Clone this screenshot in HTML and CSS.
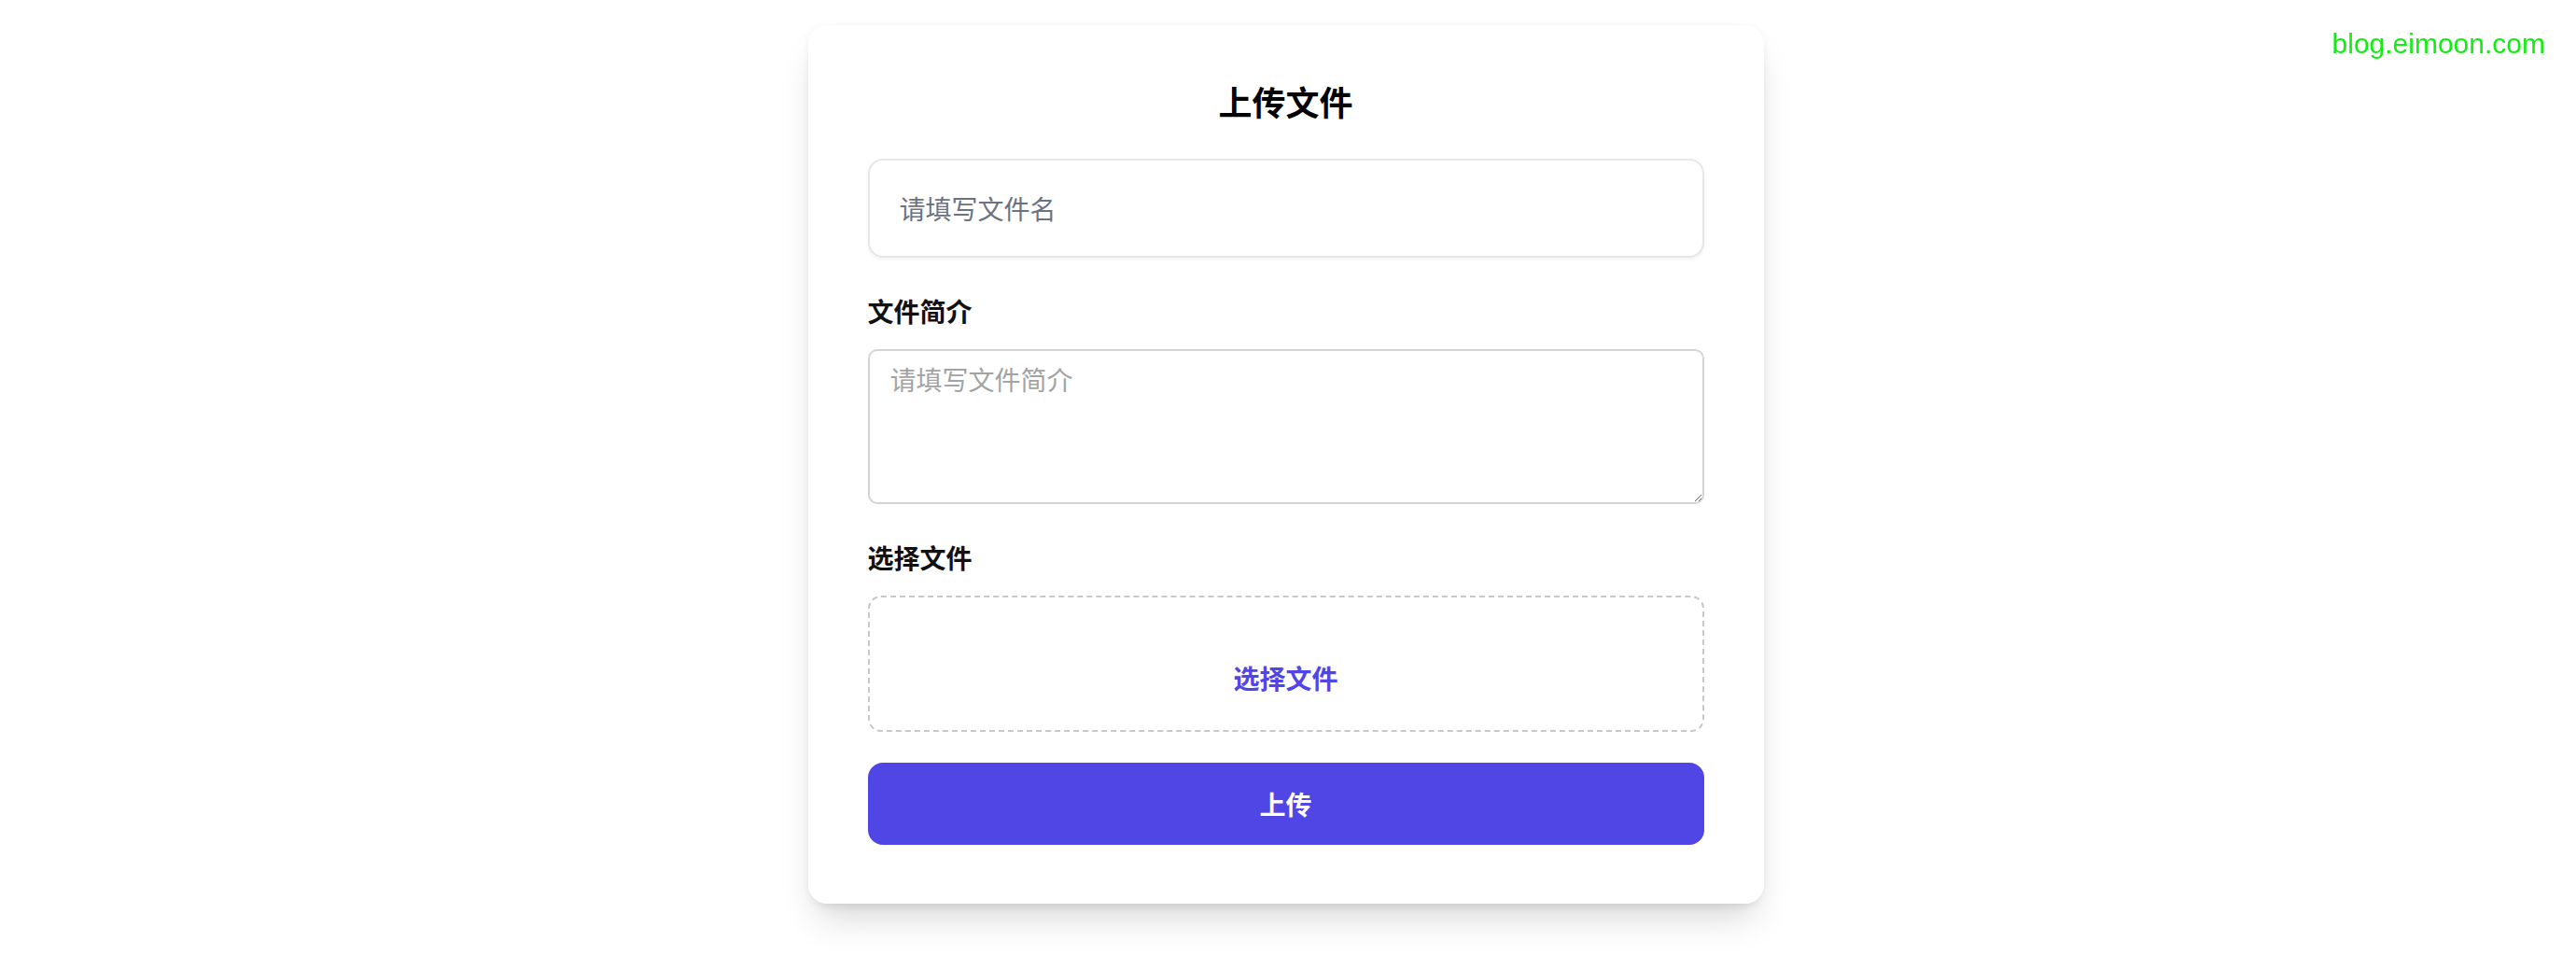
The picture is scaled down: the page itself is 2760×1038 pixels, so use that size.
FILE: index.html
```html
<!DOCTYPE html>
<html lang="zh-CN">
<head>
    <meta charset="UTF-8">
    <meta name="viewport" content="width=device-width, initial-scale=1.0">
    <title>上传文件</title>
    <link rel="stylesheet" href="styles.css">
</head>
<body>

    <div class="watermark">blog.eimoon.com</div>

    <div class="page">
        <form class="card" onsubmit="return false">
            <h1 class="title">上传文件</h1>

            <input type="text" class="name-input" placeholder="请填写文件名">

            <label class="field-label" for="desc">文件简介</label>
            <textarea id="desc" class="desc-input" placeholder="请填写文件简介"></textarea>

            <label class="field-label" for="file">选择文件</label>
            <label class="drop-box" for="file">
                <input type="file" id="file" class="file-input">
                <span class="drop-text">选择文件</span>
            </label>

            <button type="submit" class="upload-btn">上传</button>
        </form>
    </div>

</body>
</html>
```

FILE: styles.css
```css
body {
    margin: 0;
    padding: 0;
    background-color: #fff;
    font-family: "Noto Sans CJK SC", "Noto Sans", sans-serif;
}
.watermark {
    position: fixed;
    top: 30px;
    right: 33px;
    font-family: "Liberation Sans", Arial, sans-serif;
    font-size: 30px;
    color: #11ee11;
}
.page {
    display: flex;
    justify-content: center;
    align-items: flex-start;
    min-height: 1038px;
    box-sizing: border-box;
    padding: 27px 5px 0 0;
}
.card {
    width: 1024px;
    box-sizing: border-box;
    padding: 61px 64px 63px;
    background-color: #fff;
    border-radius: 20px;
    box-shadow: 0 24px 40px -10px rgba(0, 0, 0, 0.16), 0 8px 14px -8px rgba(0, 0, 0, 0.12), 0 0 8px rgba(0, 0, 0, 0.04);
    display: flex;
    flex-direction: column;
}
.title {
    margin: 0 0 42px 0;
    font-size: 36px;
    line-height: 40px;
    font-weight: 700;
    text-align: center;
    color: #000;
}
.name-input {
    height: 106px;
    box-sizing: border-box;
    padding: 32px;
    border: 2px solid #e5e7eb;
    border-radius: 16px;
    box-shadow: 0 2px 4px rgba(0, 0, 0, 0.05);
    font-family: inherit;
    font-size: 28px;
    line-height: 40px;
    outline: none;
}
.name-input::placeholder {
    color: #6b7280;
}
.field-label {
    margin: 37px 0 21px 0;
    font-size: 28px;
    line-height: 40px;
    font-weight: 600;
    color: #111;
}
.desc-input {
    height: 166px;
    box-sizing: border-box;
    padding: 10px 22px;
    border: 2px solid #d4d4d4;
    border-radius: 10px;
    font-family: inherit;
    font-size: 28px;
    line-height: 40px;
    outline: none;
}
.desc-input::placeholder {
    color: #a3a3a3;
}
.drop-box {
    height: 146px;
    box-sizing: border-box;
    padding: 66px 0 36px;
    border: 2px dashed #c8c8c8;
    border-radius: 14px;
    text-align: center;
    cursor: pointer;
}
.file-input {
    display: none;
}
.drop-text {
    display: block;
    font-size: 28px;
    line-height: 40px;
    font-weight: 700;
    color: #4f46e5;
}
.upload-btn {
    margin-top: 33px;
    height: 88px;
    border: none;
    border-radius: 16px;
    background-color: #4f46e5;
    color: #fff;
    font-family: inherit;
    font-size: 28px;
    font-weight: 700;
    cursor: pointer;
}
```
